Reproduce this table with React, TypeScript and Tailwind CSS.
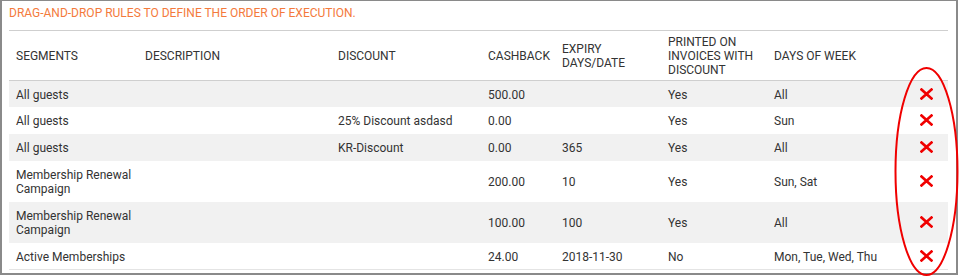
import React from 'react';

type Rule = {
  segment: string;
  description: string;
  discount: string;
  cashback: string;
  expiry: string;
  printed: string;
  days: string;
  tall?: boolean;
};

const rules: Rule[] = [
  { segment: 'All guests', description: '', discount: '', cashback: '500.00', expiry: '', printed: 'Yes', days: 'All' },
  { segment: 'All guests', description: '', discount: '25% Discount asdasd', cashback: '0.00', expiry: '', printed: 'Yes', days: 'Sun' },
  { segment: 'All guests', description: '', discount: 'KR-Discount', cashback: '0.00', expiry: '365', printed: 'Yes', days: 'All' },
  { segment: 'Membership Renewal Campaign', description: '', discount: '', cashback: '200.00', expiry: '10', printed: 'Yes', days: 'Sun, Sat', tall: true },
  { segment: 'Membership Renewal Campaign', description: '', discount: '', cashback: '100.00', expiry: '100', printed: 'Yes', days: 'All', tall: true },
  { segment: 'Active Memberships', description: '', discount: '', cashback: '24.00', expiry: '2018-11-30', printed: 'No', days: 'Mon, Tue, Wed, Thu' },
];

const headers = [
  'SEGMENTS',
  'DESCRIPTION',
  'DISCOUNT',
  'CASHBACK',
  'EXPIRY DAYS/DATE',
  'PRINTED ON INVOICES WITH DISCOUNT',
  'DAYS OF WEEK',
  '',
];

const widths = ['w-[129px]', 'w-[193px]', 'w-[150px]', 'w-[74px]', 'w-[106px]', 'w-[106px]', 'w-[137px]', 'w-[44px]'];

const RemoveIcon: React.FC = () => (
  <svg width="13" height="12" viewBox="0 0 13 12" className="mx-auto block">
    <path d="M1.5 1.5 L11.5 10.5 M11.5 1.5 L1.5 10.5" stroke="#f00000" strokeWidth="2.6" strokeLinecap="square" />
  </svg>
);

const App: React.FC = () => {
  return (
    <div className="bg-white w-[961px] h-[277px]" style={{ fontFamily: 'Roboto, "Liberation Sans", sans-serif' }}>
      <div className="relative w-[958px] h-[275px] border-t border-l-2 border-r-2 border-b-2 border-[#8a8a8a] pl-[7px] pr-[7px]">
        <div className="pt-[5px] pb-[10px] text-[12px] leading-[14px] text-[#f47a3c]">
          DRAG-AND-DROP RULES TO DEFINE THE ORDER OF EXECUTION.
        </div>

        <table className="table-fixed border-collapse w-[939px] text-[12px] leading-[14px] text-[#333]">
          <colgroup>
            {widths.map((w, i) => (
              <col key={i} className={w} />
            ))}
          </colgroup>
          <thead>
            <tr className="border-t border-b border-[#cfcfcf] h-[50px]">
              {headers.map((h, i) => (
                <th key={i} className="text-left font-normal align-middle pl-[7px] pr-[2px]">
                  {h}
                </th>
              ))}
            </tr>
          </thead>
          <tbody>
            {rules.map((r, i) => (
              <tr
                key={i}
                className={`${i % 2 === 0 ? 'bg-[#f1f1f1]' : 'bg-white'} ${r.tall ? 'h-[41px]' : i === 0 ? 'h-[26px]' : 'h-[27px]'} ${i === rules.length - 1 ? 'border-b border-[#e4e4e4]' : ''}`}
              >
                <td className="pl-[7px] pr-[2px] pt-[2px] align-middle">{r.segment}</td>
                <td className="pl-[7px] pr-[2px] pt-[2px] align-middle">{r.description}</td>
                <td className="pl-[7px] pr-[2px] pt-[2px] align-middle">{r.discount}</td>
                <td className="pl-[7px] pr-[2px] pt-[2px] align-middle">{r.cashback}</td>
                <td className="pl-[7px] pr-[2px] pt-[2px] align-middle">{r.expiry}</td>
                <td className="pl-[7px] pr-[2px] pt-[2px] align-middle">{r.printed}</td>
                <td className="pl-[7px] pr-[2px] pt-[2px] align-middle">{r.days}</td>
                <td className="align-middle">
                  <RemoveIcon />
                </td>
              </tr>
            ))}
          </tbody>
        </table>

        <svg className="absolute left-[890px] top-[64px] pointer-events-none" width="70" height="213" viewBox="0 0 70 213">
          <ellipse cx="34.5" cy="106.5" rx="31" ry="103.5" fill="none" stroke="#f00000" strokeWidth="2" />
        </svg>
      </div>
    </div>
  );
};

export default App;
